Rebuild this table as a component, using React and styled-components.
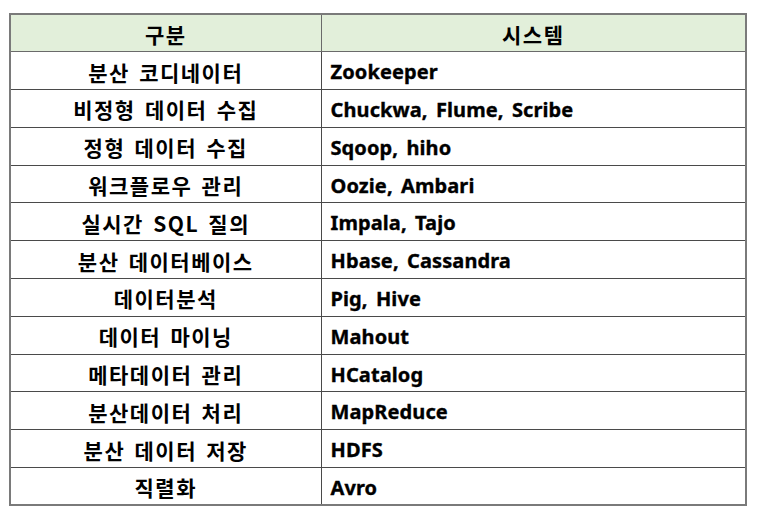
import React from "react";
import styled, { createGlobalStyle } from "styled-components";

const Global = createGlobalStyle`
  html, body { margin: 0; padding: 0; background: #fff; }
  body { font-family: "Noto Sans CJK KR", "Noto Sans", sans-serif; }
`;

const Page = styled.div`
  padding: 13px 0 0 9px;
`;

const Table = styled.table`
  border-collapse: collapse;
  width: 738px;
  table-layout: fixed;
  border: 2px solid #7a7a7a;
`;

const Col1 = styled.col`
  width: 311px;
`;

const Row = styled.tr`
  height: 37.8px;
`;

const HeadCell = styled.th`
  background: #e2efda;
  border: 1px solid #6a6a6a;
  font-family: "Noto Sans CJK KR", sans-serif;
  font-weight: 700;
  font-size: 21px;
  letter-spacing: 1.5px;
  color: #000;
  text-align: center;
  padding: 3px 0 0;
  line-height: 1;
`;

const Cell = styled.td`
  border: 1px solid #4a4a4a;
  font-weight: 700;
  color: #000;
  line-height: 1;
  padding: ${(p) => (p.$left ? "3px 0 0 9px" : "3px 0 0")};
  text-align: ${(p) => (p.$left ? "left" : "center")};
  font-family: ${(p) =>
    p.$left
      ? `"Noto Sans", "Noto Sans CJK KR", sans-serif`
      : `"Noto Sans CJK KR", sans-serif`};
  font-size: ${(p) => (p.$left ? "20px" : "21px")};
  letter-spacing: ${(p) => (p.$left ? "0.1px" : "1.5px")};
  word-spacing: 3px;
  -webkit-text-stroke: ${(p) => (p.$left ? "0.35px #000" : "0")};
`;

const rows = [
  ["분산 코디네이터", "Zookeeper"],
  ["비정형 데이터 수집", "Chuckwa, Flume, Scribe"],
  ["정형 데이터 수집", "Sqoop, hiho"],
  ["워크플로우 관리", "Oozie, Ambari"],
  ["실시간 SQL 질의", "Impala, Tajo"],
  ["분산 데이터베이스", "Hbase, Cassandra"],
  ["데이터분석", "Pig, Hive"],
  ["데이터 마이닝", "Mahout"],
  ["메타데이터 관리", "HCatalog"],
  ["분산데이터 처리", "MapReduce"],
  ["분산 데이터 저장", "HDFS"],
  ["직렬화", "Avro"],
];

export default function App() {
  return (
    <Page>
      <Global />
      <Table>
        <colgroup>
          <Col1 />
          <col />
        </colgroup>
        <thead>
          <Row>
            <HeadCell>구분</HeadCell>
            <HeadCell>시스템</HeadCell>
          </Row>
        </thead>
        <tbody>
          {rows.map(([a, b]) => (
            <Row key={a}>
              <Cell>{a}</Cell>
              <Cell $left>{b}</Cell>
            </Row>
          ))}
        </tbody>
      </Table>
    </Page>
  );
}
